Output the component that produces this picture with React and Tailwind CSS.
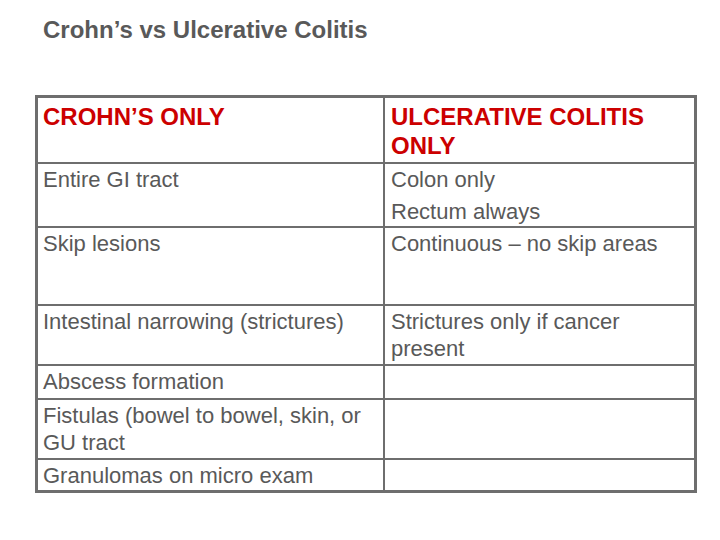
import React from 'react';

const font = { fontFamily: '"Liberation Sans", Arial, sans-serif' };

const Row = ({ left, right, h, first }) => (
  <div className={`flex ${first ? '' : 'border-t-2 border-[#6e6e6e]'}`} style={{ height: h }}>
    <div className="w-[347px] shrink-0 border-r-2 border-[#6e6e6e] pl-[5px] pt-[2px]">{left}</div>
    <div className="flex-1 pl-[6px] pt-[2px]">{right}</div>
  </div>
);

export default function App() {
  return (
    <div className="w-[720px] h-[540px] bg-white text-[#595959]" style={font}>
      <div className="pl-[43px] pt-[16px] text-[24px] leading-[28px] font-bold">
        Crohn’s vs Ulcerative Colitis
      </div>

      <div className="ml-[35px] mt-[51px] w-[662px] border-[3px] border-[#6e6e6e] text-[22px] leading-[27px]">
        <div className="flex h-[64px] text-[#cc0000] font-bold text-[24px] leading-[29px]">
          <div className="w-[347px] shrink-0 border-r-2 border-[#6e6e6e] pl-[5px] pt-[4px]">CROHN’S ONLY</div>
          <div className="flex-1 pl-[6px] pt-[4px]">
            ULCERATIVE COLITIS
            <br />
            ONLY
          </div>
        </div>
        <Row
          h={64}
          left="Entire GI tract"
          right={
            <>
              <div>Colon only</div>
              <div className="mt-[5px]">Rectum always</div>
            </>
          }
        />
        <Row h={78} left="Skip lesions" right="Continuous – no skip areas" />
        <Row
          h={60}
          left="Intestinal narrowing (strictures)"
          right={
            <>
              Strictures only if cancer
              <br />
              present
            </>
          }
        />
        <Row h={34} left="Abscess formation" right="" />
        <Row
          h={60}
          left={
            <>
              Fistulas (bowel to bowel, skin, or
              <br />
              GU tract
            </>
          }
          right=""
        />
        <Row h={32} left="Granulomas on micro exam" right="" />
      </div>
    </div>
  );
}
